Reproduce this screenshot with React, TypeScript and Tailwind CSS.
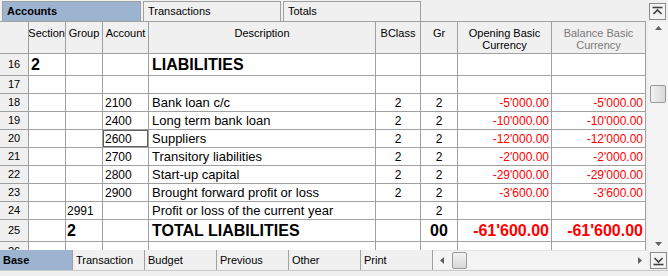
import React from "react";

type Row = {
  n: number;
  h: number;
  section?: string;
  group?: string;
  groupBold?: boolean;
  acc?: string;
  desc?: string;
  descBold?: boolean;
  bc?: string;
  gr?: string;
  grBold?: boolean;
  open?: string;
  bal?: string;
  amtBold?: boolean;
  selected?: boolean;
};

const rows: Row[] = [
  { n: 16, h: 22, section: "2", desc: "LIABILITIES", descBold: true },
  { n: 17, h: 18 },
  { n: 18, h: 18, acc: "2100", desc: "Bank loan c/c", bc: "2", gr: "2", open: "-5'000.00", bal: "-5'000.00" },
  { n: 19, h: 18, acc: "2400", desc: "Long term bank loan", bc: "2", gr: "2", open: "-10'000.00", bal: "-10'000.00" },
  { n: 20, h: 18, acc: "2600", desc: "Suppliers", bc: "2", gr: "2", open: "-12'000.00", bal: "-12'000.00", selected: true },
  { n: 21, h: 18, acc: "2700", desc: "Transitory liabilities", bc: "2", gr: "2", open: "-2'000.00", bal: "-2'000.00" },
  { n: 22, h: 18, acc: "2800", desc: "Start-up capital", bc: "2", gr: "2", open: "-29'000.00", bal: "-29'000.00" },
  { n: 23, h: 18, acc: "2900", desc: "Brought forward profit or loss", bc: "2", gr: "2", open: "-3'600.00", bal: "-3'600.00" },
  { n: 24, h: 18, group: "2991", desc: "Profit or loss of the current year", gr: "2" },
  { n: 25, h: 22, group: "2", groupBold: true, desc: "TOTAL LIABILITIES", descBold: true, gr: "00", grBold: true, open: "-61'600.00", bal: "-61'600.00", amtBold: true },
];

const cell = "border-r border-b border-[#a0a0a0] bg-white flex items-center overflow-hidden whitespace-nowrap shrink-0";
const lastCell = "border-r border-[#a0a0a0] bg-white shrink-0 h-full";

function TopBtn({ down }: { down?: boolean }) {
  return (
    <div className="w-[17px] h-[17px] border border-[#8c8c8c] bg-[#f4f4f4] flex items-center justify-center">
      <svg width="11" height="11" viewBox="0 0 11 11">
        {down ? (
          <g stroke="#404040" strokeWidth="1.6" fill="none">
            <path d="M1.5 3 L5.5 7 L9.5 3" />
            <path d="M0.5 9.5 H10.5" />
          </g>
        ) : (
          <g stroke="#404040" strokeWidth="1.6" fill="none">
            <path d="M0.5 1.5 H10.5" />
            <path d="M1.5 8 L5.5 4 L9.5 8" />
          </g>
        )}
      </svg>
    </div>
  );
}

export default function App() {
  return (
    <div className="w-[668px] h-[276px] bg-[#f0f0f0] flex flex-col overflow-hidden font-['Liberation_Sans',Arial,sans-serif] text-black">
      {/* top tabs */}
      <div className="flex h-[22px] shrink-0">
        <div className="w-[646px] flex items-end border-b border-[#a0a0a0] pl-[2px]">
          <div className="w-[139px] h-[20px] bg-[#9db4d1] border border-[#a0a0a0] border-b-0 flex items-center pl-[4px] text-[11px] font-bold">Accounts</div>
          <div className="ml-[2px] w-[138px] h-[20px] bg-[#f0f0f0] border border-[#a0a0a0] border-b-0 flex items-center pl-[4px] text-[11px]">Transactions</div>
          <div className="ml-[2px] w-[138px] h-[20px] bg-[#f0f0f0] border border-[#a0a0a0] border-b-0 flex items-center pl-[4px] text-[11px]">Totals</div>
        </div>
        <div className="flex-1 flex justify-center pt-[3px] pl-[1px]">
          <TopBtn />
        </div>
      </div>

      {/* grid + vscroll */}
      <div className="flex h-[228px] shrink-0">
        <div className="w-[646px] flex flex-col overflow-hidden">
          {/* header */}
          <div className="flex h-[32px] shrink-0 text-[11px] leading-[12px]">
            <div className="w-[29px] h-full border-r border-b border-[#a0a0a0] bg-[#f0f0f0]" />
            <div className="w-[37px] h-full border-r border-b border-[#a0a0a0] bg-[#f0f0f0] flex justify-end pt-[5px] overflow-hidden whitespace-nowrap">Section</div>
            <div className="w-[37px] h-full border-r border-b border-[#a0a0a0] bg-[#f0f0f0] flex justify-center pt-[5px]">Group</div>
            <div className="w-[46px] h-full border-r border-b border-[#a0a0a0] bg-[#f0f0f0] flex justify-center pt-[5px]">Account</div>
            <div className="w-[227px] h-full border-r border-b border-[#a0a0a0] bg-[#f0f0f0] flex justify-center pt-[5px]">Description</div>
            <div className="w-[45px] h-full border-r border-b border-[#a0a0a0] bg-[#f0f0f0] flex justify-center pt-[5px]">BClass</div>
            <div className="w-[37px] h-full border-r border-b border-[#a0a0a0] bg-[#f0f0f0] flex justify-center pt-[5px]">Gr</div>
            <div className="w-[94px] h-full border-r border-b border-[#a0a0a0] bg-[#f0f0f0] flex flex-col items-center pt-[5px] text-center">
              <span>Opening Basic</span>
              <span>Currency</span>
            </div>
            <div className="w-[94px] h-full border-r border-b border-[#a0a0a0] bg-[#f0f0f0] flex flex-col items-center pt-[5px] text-center text-[#7a7a7a]">
              <span>Balance Basic</span>
              <span>Currency</span>
            </div>
          </div>
          {rows.map((r) => {
            const big = r.h === 22;
            return (
              <div key={r.n} className={`flex shrink-0 ${big ? "h-[22px]" : "h-[18px]"}`}>
                <div className="w-[29px] border-r border-b border-[#a0a0a0] bg-[#f0f0f0] flex items-center justify-center text-[11px] shrink-0">{r.n}</div>
                <div className={`w-[37px] ${cell} pl-[2px] text-[16px] font-bold`}>{r.section}</div>
                <div className={`w-[37px] ${cell} pl-[1px] ${r.groupBold ? "text-[16px] font-bold" : "text-[12px]"}`}>{r.group}</div>
                <div className={`w-[46px] ${cell} pl-[2px] text-[12px] ${r.selected ? "shadow-[inset_0_0_0_1px_#606060]" : ""}`}>{r.acc}</div>
                <div className={`w-[227px] ${cell} pl-[3px] ${r.descBold ? "text-[16px] font-bold" : "text-[13px]"}`}>{r.desc}</div>
                <div className={`w-[45px] ${cell} justify-center text-[12px]`}>{r.bc}</div>
                <div className={`w-[37px] ${cell} justify-center ${r.grBold ? "text-[16px] font-bold" : "text-[12px]"}`}>{r.gr}</div>
                <div className={`w-[94px] ${cell} justify-end pr-[2px] text-[#ff0000] ${r.amtBold ? "text-[16px] font-bold" : "text-[12px]"}`}>{r.open}</div>
                <div className={`w-[94px] ${cell} justify-end pr-[2px] text-[#ff0000] ${r.amtBold ? "text-[16px] font-bold" : "text-[12px]"}`}>{r.bal}</div>
              </div>
            );
          })}
          {/* partially visible row 26 */}
          <div className="flex h-[8px] shrink-0 overflow-hidden">
            <div className="w-[29px] h-full border-r border-[#a0a0a0] bg-[#f0f0f0] flex justify-center text-[11px] leading-[12px] pt-[3px] overflow-hidden shrink-0">26</div>
            <div className={`w-[37px] ${lastCell}`} />
            <div className={`w-[37px] ${lastCell}`} />
            <div className={`w-[46px] ${lastCell}`} />
            <div className={`w-[227px] ${lastCell}`} />
            <div className={`w-[45px] ${lastCell}`} />
            <div className={`w-[37px] ${lastCell}`} />
            <div className={`w-[94px] ${lastCell}`} />
            <div className={`w-[94px] ${lastCell}`} />
          </div>
        </div>
        {/* vertical scrollbar */}
        <div className="ml-[2px] w-[20px] bg-[#f4f4f4] flex flex-col items-center">
          <svg width="7" height="4" viewBox="0 0 7 4" className="mt-[4px]">
            <path d="M0 4 L3.5 0 L7 4 Z" fill="#606060" />
          </svg>
          <div className="mt-[55px] w-[16px] h-[18px] rounded-[2px] border border-[#9a9a9a] bg-gradient-to-r from-[#f2f2f2] to-[#d8d8d8]" />
          <div className="flex-1" />
          <svg width="7" height="4" viewBox="0 0 7 4" className="mb-[4px]">
            <path d="M0 0 L7 0 L3.5 4 Z" fill="#606060" />
          </svg>
        </div>
      </div>

      {/* bottom tabs + hscroll */}
      <div className="flex h-[21px] shrink-0 border-b border-[#c8c8c8]">
        <div className="w-[73px] h-full bg-[#9db4d1] border-r border-[#a0a0a0] flex items-center pl-[3px] text-[11px] font-bold">Base</div>
        <div className="w-[72px] h-full bg-[#f0f0f0] border-r border-[#a0a0a0] flex items-center pl-[3px] text-[11px]">Transaction</div>
        <div className="w-[72px] h-full bg-[#f0f0f0] border-r border-[#a0a0a0] flex items-center pl-[3px] text-[11px]">Budget</div>
        <div className="w-[72px] h-full bg-[#f0f0f0] border-r border-[#a0a0a0] flex items-center pl-[3px] text-[11px]">Previous</div>
        <div className="w-[72px] h-full bg-[#f0f0f0] border-r border-[#a0a0a0] flex items-center pl-[3px] text-[11px]">Other</div>
        <div className="w-[72px] h-full bg-[#f0f0f0] border-r border-[#a0a0a0] flex items-center pl-[3px] text-[11px]">Print</div>
        <div className="w-[215px] h-full bg-[#f4f4f4] flex items-center pl-[7px] pr-[6px] border-t border-[#e4e4e4]">
          <svg width="4" height="7" viewBox="0 0 4 7">
            <path d="M4 0 L0 3.5 L4 7 Z" fill="#606060" />
          </svg>
          <div className="ml-[8px] w-[15px] h-[17px] rounded-[2px] border border-[#9a9a9a] bg-gradient-to-b from-[#f2f2f2] to-[#d8d8d8]" />
          <div className="flex-1" />
          <svg width="4" height="7" viewBox="0 0 4 7">
            <path d="M0 0 L4 3.5 L0 7 Z" fill="#606060" />
          </svg>
        </div>
        <div className="flex-1 flex items-center justify-center pl-[1px]">
          <TopBtn down />
        </div>
      </div>
      <div className="flex-1 bg-[#f0f0f0]" />
    </div>
  );
}
